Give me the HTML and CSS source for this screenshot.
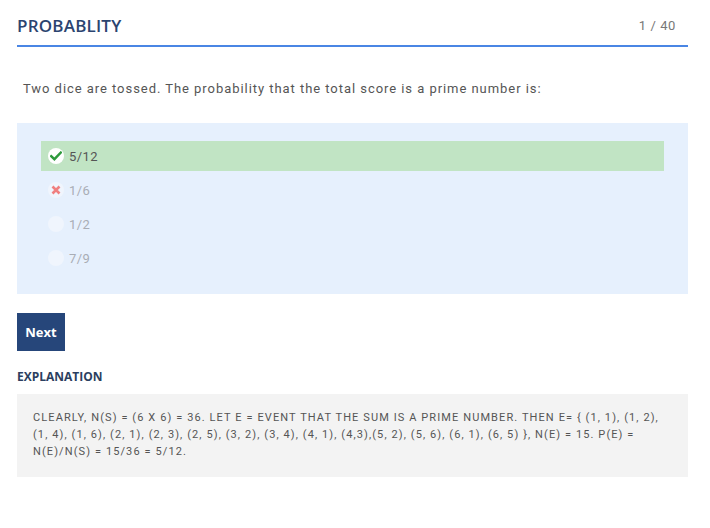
FILE: index.html
```html
<!DOCTYPE html>
<html>
<head>
<meta charset="utf-8">
<link rel="stylesheet" href="styles.css">
</head>
<body>
<div class="page">
  <div class="header">
    <h1 class="title">PROBABLITY</h1>
    <span class="count">1 / 40</span>
  </div>
  <p class="question">Two dice are tossed. The probability that the total score is a prime number is:</p>
  <div class="options">
    <div class="option correct">
      <span class="icon icon-check"><svg width="12" height="10" viewBox="0 0 12 10"><path d="M1.2 5.2 L4.4 8.2 L10.8 1.6" fill="none" stroke="#2e9a3c" stroke-width="2.4" stroke-linecap="square"/></svg></span>
      <span class="label">5/12</span>
    </div>
    <div class="option">
      <span class="icon"><svg width="10" height="10" viewBox="0 0 10 10"><path d="M1.5 1.5 L8.5 8.5 M8.5 1.5 L1.5 8.5" stroke="#f07f7f" stroke-width="2.6"/></svg></span>
      <span class="label">1/6</span>
    </div>
    <div class="option">
      <span class="icon"></span>
      <span class="label">1/2</span>
    </div>
    <div class="option">
      <span class="icon"></span>
      <span class="label">7/9</span>
    </div>
  </div>
  <button class="next">Next</button>
  <h2 class="exp-title">EXPLANATION</h2>
  <div class="exp-box">CLEARLY, N(S) = (6 X 6) = 36. LET E = EVENT THAT THE SUM IS A PRIME NUMBER. THEN E= { (1, 1), (1, 2), (1, 4), (1, 6), (2, 1), (2, 3), (2, 5), (3, 2), (3, 4), (4, 1), (4,3),(5, 2), (5, 6), (6, 1), (6, 5) }, N(E) = 15. P(E) = N(E)/N(S) = 15/36 = 5/12.</div>
</div>
</body>
</html>
```
FILE: styles.css
```css
html, body {
  margin: 0;
  padding: 0;
  background: #fff;
}
.page {
  width: 671px;
  padding: 0 0 0 17px;
  font-family: Roboto, "Liberation Sans", sans-serif;
}
.header {
  display: flex;
  justify-content: space-between;
  align-items: flex-end;
  height: 45px;
  border-bottom: 2px solid #4a86e4;
  box-sizing: content-box;
}
.title {
  margin: 0 0 8px 0;
  font-family: "Open Sans", sans-serif;
  font-weight: 600;
  font-size: 17px;
  line-height: 22px;
  letter-spacing: 0.2px;
  color: #2b4470;
}
.count {
  margin: 0 12px 8px 0;
  font-size: 13px;
  line-height: 22px;
  color: #777;
  letter-spacing: 0.6px;
}
.question {
  margin: 0;
  padding: 33px 0 0 6px;
  height: 43px;
  font-size: 13px;
  line-height: 18px;
  color: #555;
  letter-spacing: 0.95px;
}
.options {
  background: #e6f0fd;
  padding: 18px 24px 21px 24px;
  display: flex;
  flex-direction: column;
  gap: 4px;
}
.option {
  height: 30px;
  display: flex;
  align-items: center;
  padding-left: 7px;
  gap: 5px;
  color: #a9adb5;
  font-size: 13px;
  letter-spacing: 0.4px;
}
.option.correct {
  background: #c1e4c4;
  color: #555;
}
.icon {
  width: 16px;
  height: 16px;
  border-radius: 50%;
  background: #f0f5fd;
  display: flex;
  align-items: center;
  justify-content: center;
}
.icon-check {
  background: #fff;
}
.next {
  display: block;
  margin-top: 19px;
  width: 48px;
  height: 38px;
  border: 0;
  padding: 0;
  background: #26467a;
  color: #fff;
  font-family: "Open Sans", sans-serif;
  font-weight: 700;
  font-size: 13px;
  cursor: pointer;
}
.exp-title {
  margin: 19px 0 0 0;
  font-family: "Open Sans", sans-serif;
  font-weight: 700;
  font-size: 12px;
  line-height: 14px;
  color: #2b3f60;
}
.exp-box {
  margin-top: 10px;
  background: #f3f3f3;
  padding: 15px 12px 17px 16px;
  font-size: 11px;
  line-height: 17px;
  color: #555;
  letter-spacing: 1.1px;
}
```
